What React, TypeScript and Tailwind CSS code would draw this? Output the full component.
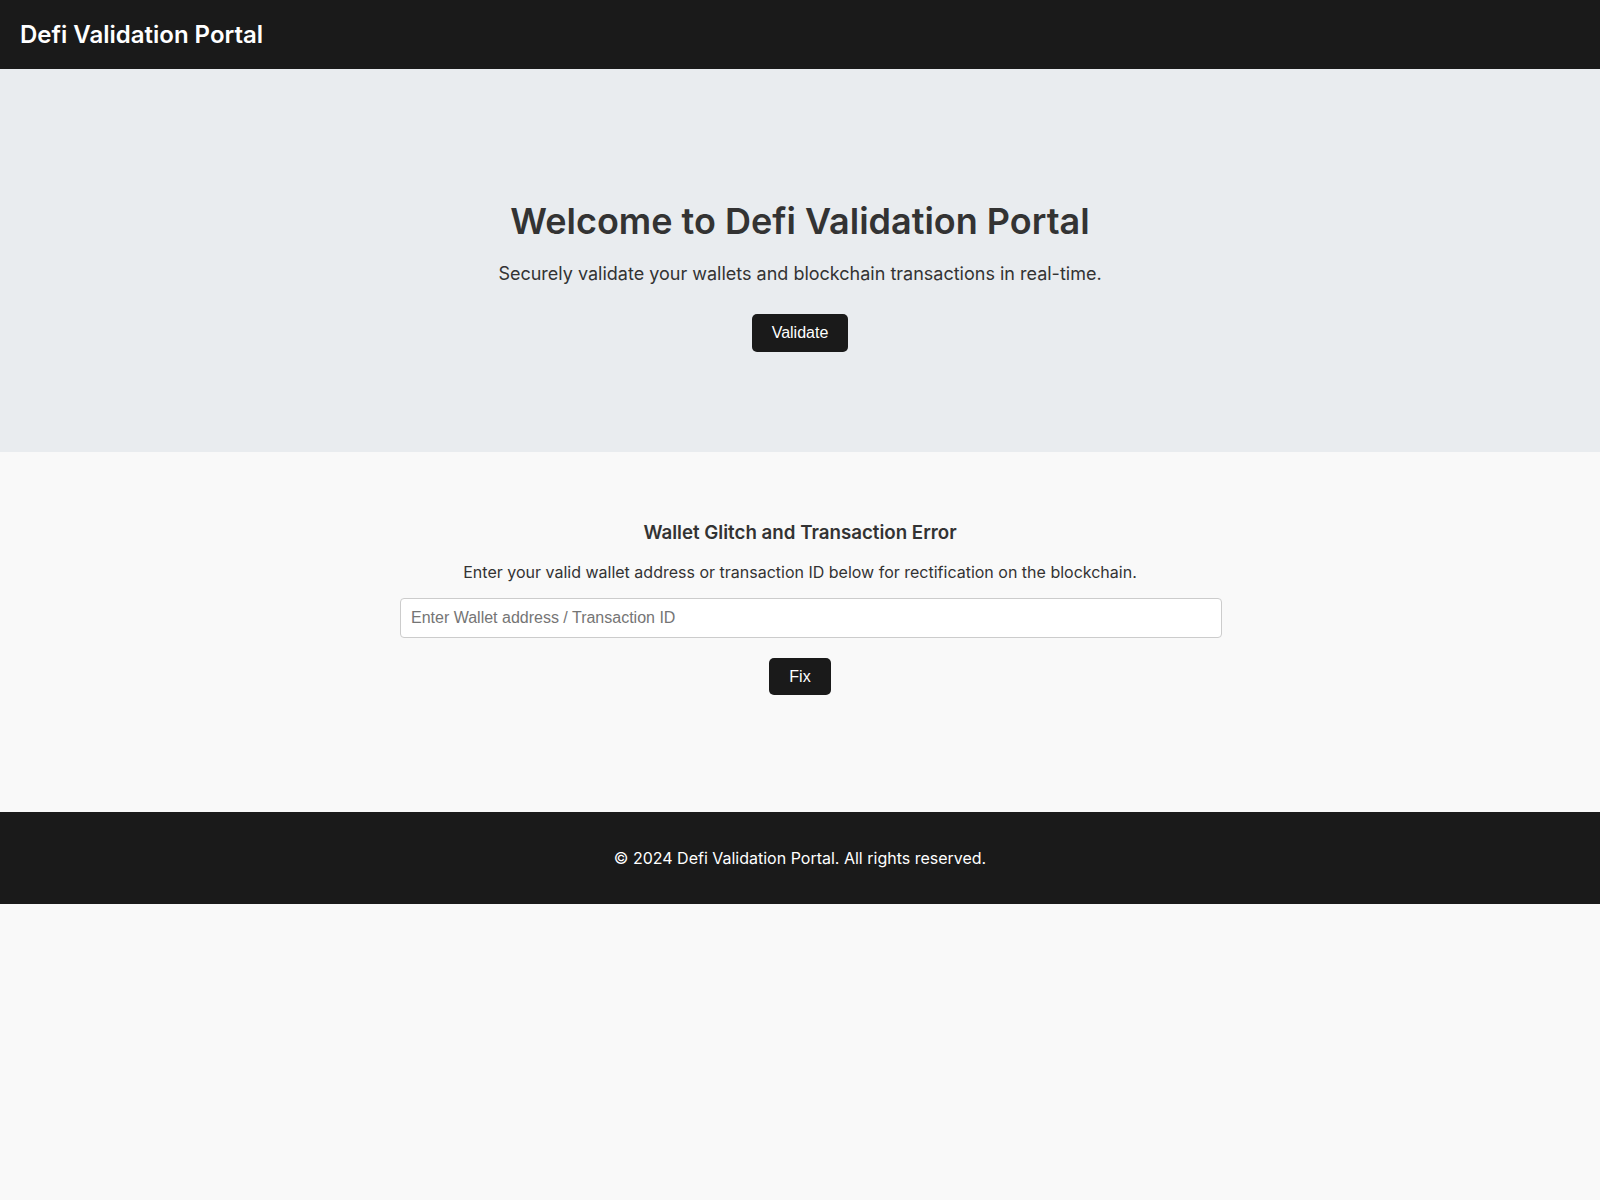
export default function App() {
  return (
    <div className="min-h-screen bg-[#f9f9f9] font-['Inter',sans-serif] text-[#333]">
      <header className="flex h-[69px] items-center bg-[#1a1a1a] px-5">
        <h1 className="text-2xl font-semibold text-white">Defi Validation Portal</h1>
      </header>

      <section className="flex h-[383px] flex-col items-center bg-[#e9ecef] pt-[131px] text-center">
        <h2 className="text-[36px] font-semibold leading-[1.2]">Welcome to Defi Validation Portal</h2>
        <p className="mt-[17px] text-lg leading-[27px]">
          Securely validate your wallets and blockchain transactions in real-time.
        </p>
        <button className="mt-[27px] h-[38px] rounded-[5px] bg-[#1a1a1a] px-5 font-['Liberation_Sans',Arial,sans-serif] text-base text-white">
          Validate
        </button>
      </section>

      <main className="flex h-[360px] flex-col items-center pt-[69px] text-center">
        <div className="flex w-[800px] flex-col items-center">
          <h3 className="text-[18.72px] font-semibold leading-6">Wallet Glitch and Transaction Error</h3>
          <p className="mt-[15px] text-base leading-6">
            Enter your valid wallet address or transaction ID below for rectification on the blockchain.
          </p>
          <div className="mt-[14px] w-full">
            <input
              type="text"
              placeholder="Enter Wallet address / Transaction ID"
              className="box-content h-[18px] w-full rounded-[4px] border border-[#ccc] bg-white px-[10px] py-[10px] font-['Liberation_Sans',Arial,sans-serif] text-base text-[#333] placeholder:text-[#757575] outline-none"
            />
          </div>
          <button className="mt-5 h-[37px] rounded-[5px] bg-[#1a1a1a] px-5 font-['Liberation_Sans',Arial,sans-serif] text-base text-white">
            Fix
          </button>
        </div>
      </main>

      <footer className="flex h-[92px] items-center justify-center bg-[#1a1a1a] text-base text-white">
        <p>© 2024 Defi Validation Portal. All rights reserved.</p>
      </footer>
    </div>
  );
}
